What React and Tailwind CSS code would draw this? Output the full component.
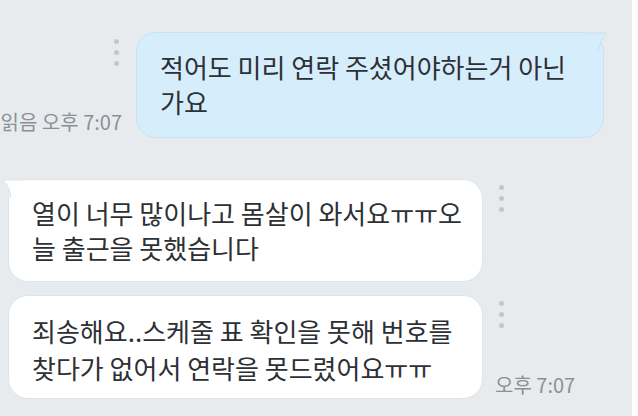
const font = { fontFamily: '"Noto Sans CJK KR", "Noto Sans", sans-serif' };

function Dots() {
  return (
    <div className="flex flex-col gap-[6px]">
      <span className="block w-[5px] h-[5px] rounded-full bg-[#c3c7cc]" />
      <span className="block w-[5px] h-[5px] rounded-full bg-[#c3c7cc]" />
      <span className="block w-[5px] h-[5px] rounded-full bg-[#c3c7cc]" />
    </div>
  );
}

function SentTail() {
  return (
    <svg className="absolute top-[-1px] right-[-8px]" width="20" height="22" viewBox="0 0 20 22">
      <path d="M0 1 L15 1 Q16.5 1 15 2.5 Q9 8 7 20 L0 20 Z" fill="#d6edfc" />
      <path d="M0 1 L15 1 Q16.5 1 15 2.5 Q9 8 7 20" fill="none" stroke="#c6e2f5" strokeWidth="1" />
    </svg>
  );
}

function RecvTail() {
  return (
    <svg className="absolute top-[-1px] left-[-7px]" width="20" height="22" viewBox="0 0 20 22">
      <path d="M20 1 L2 1 Q0.5 1 2 2.5 Q8 8 9 20 L20 20 Z" fill="#ffffff" />
      <path d="M20 1 L2 1 Q0.5 1 2 2.5 Q8 8 9 20" fill="none" stroke="#dfe2e5" strokeWidth="1" />
    </svg>
  );
}

export default function App() {
  return (
    <div className="w-[638px] h-[416px] flex bg-white overflow-hidden" style={font}>
      <div className="w-[632px] h-full bg-[#e8ebee] flex flex-col pt-[32px]">
        {/* sent */}
        <div className="flex justify-end pr-[28px]">
          <div className="flex flex-col justify-between items-end pt-[7px] pb-[4px] mr-[14px] whitespace-nowrap">
            <div className="pr-[3px]">
              <Dots />
            </div>
            <span className="text-[20px] leading-[24px] text-[#8b9096]">읽음 오후 7:07</span>
          </div>
          <div className="relative shrink-0 w-[468px] h-[106px] bg-[#d6edfc] border border-[#c6e2f5] rounded-[20px] pl-[23px] pt-[16px] text-[26px] leading-[35px] text-[#2d3034] whitespace-nowrap">
            <SentTail />
            <span className="relative">적어도 미리 연락 주셨어야하는거 아닌<br />가요</span>
          </div>
        </div>

        {/* received 1 */}
        <div className="flex mt-[41px] pl-[8px]">
          <div className="relative shrink-0 w-[475px] h-[103px] bg-white border border-[#e1e4e7] rounded-[20px] pl-[23px] pt-[15px] text-[26px] leading-[35px] text-[#2d3034] whitespace-nowrap">
            <RecvTail />
            <span className="relative">열이 너무 많이나고 몸살이 와서요ㅠㅠ오<br />늘 출근을 못했습니다</span>
          </div>
          <div className="ml-[16px] pt-[6px]">
            <Dots />
          </div>
        </div>

        {/* received 2 */}
        <div className="flex mt-[13px] pl-[8px]">
          <div className="shrink-0 w-[475px] h-[104px] bg-white border border-[#e1e4e7] rounded-[20px] pl-[23px] pt-[16px] text-[26px] leading-[37px] text-[#2d3034] whitespace-nowrap">
            죄송해요..스케줄 표 확인을 못해 번호를<br />찾다가 없어서 연락을 못드렸어요ㅠㅠ
          </div>
          <div className="flex flex-col justify-between ml-[12px] pt-[6px] pb-[2px] whitespace-nowrap">
            <div className="pl-[4px]">
              <Dots />
            </div>
            <span className="text-[20px] leading-[24px] text-[#8b9096]">오후 7:07</span>
          </div>
        </div>
      </div>
    </div>
  );
}
